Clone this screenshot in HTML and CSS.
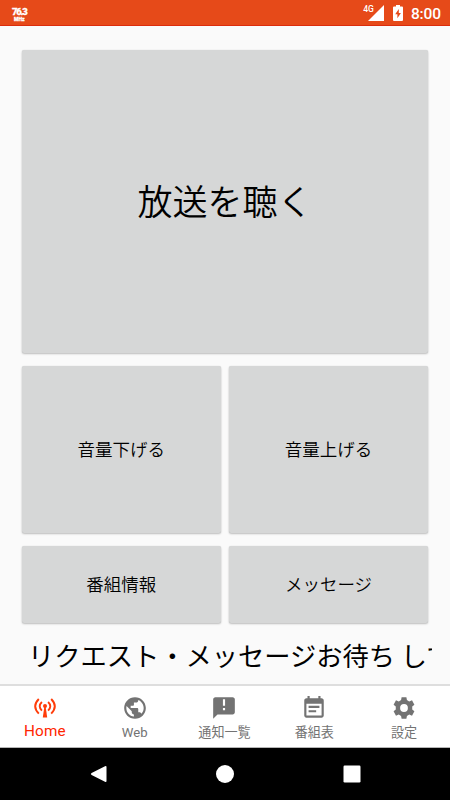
FILE: index.html
```html
<!DOCTYPE html>
<html lang="ja">
<head>
<meta charset="utf-8">
<title>Radio</title>
<link rel="stylesheet" href="styles.css">
</head>
<body>
<div class="app">
  <header class="status">
    <div class="station"><span class="freq">76.3</span><span class="mhz">MHz</span></div>
    <div class="indicators">
      <span class="network">4G</span>
      <svg class="signal" viewBox="0 0 16 16"><path d="M16 0V16H0Z"/></svg>
      <svg class="battery" viewBox="0 0 10 16"><path fill-rule="evenodd" d="M3 0H7V1.5H9Q10 1.5 10 2.5V15Q10 16 9 16H1Q0 16 0 15V2.5Q0 1.5 1 1.5H3ZM5.8 4L2.2 9.3H4.4V13.3L7.9 8H5.8Z"/></svg>
      <span class="clock">8:00</span>
    </div>
  </header>
  <main class="content">
    <button class="btn listen">放送を聴く</button>
    <div class="row volume">
      <button class="btn">音量下げる</button>
      <button class="btn">音量上げる</button>
    </div>
    <div class="row links">
      <button class="btn">番組情報</button>
      <button class="btn">メッセージ</button>
    </div>
    <div class="marquee">リクエスト・メッセージお待ち して</div>
  </main>
  <nav class="tabs">
    <a class="tab active">
      <svg class="antenna" viewBox="0 0 22 20"><g fill="none" stroke="currentColor" stroke-width="1.9"><path d="M4.800 1Q-2.400 8.300 4.800 15.600M17.200 1Q24.400 8.300 17.200 15.600M7.900 4Q3.500 8.300 7.900 12.600M14.100 4Q18.500 8.300 14.100 12.600"/></g><circle cx="11" cy="8" r="2"/><path d="M10.300 9H11.700L13.200 19.500H8.800Z"/></svg>
      <span>Home</span>
    </a>
    <a class="tab">
      <svg viewBox="0 0 24 24"><path d="M12 2C6.48 2 2 6.48 2 12s4.48 10 10 10 10-4.48 10-10S17.52 2 12 2zm-1 17.93c-3.95-.49-7-3.85-7-7.93 0-.62.08-1.21.21-1.79L9 15v1c0 1.1.9 2 2 2v1.930zm6.900-2.540c-.26-.81-1-1.390-1.900-1.390h-1v-3c0-.55-.45-1-1-1H8v-2h2c.55 0 1-.45 1-1V7h2c1.100 0 2-.9 2-2v-.41c2.930 1.190 5 4.060 5 7.410 0 2.080-.8 3.970-2.100 5.390z"/></svg>
      <span>Web</span>
    </a>
    <a class="tab">
      <svg viewBox="0 0 24 24"><path d="M20 2H4c-1.100 0-1.990.9-1.990 2L2 22l4-4h14c1.100 0 2-.9 2-2V4c0-1.100-.9-2-2-2zm-7 12h-2v-2h2v2zm0-4h-2V4h2v6z"/></svg>
      <span>通知一覧</span>
    </a>
    <a class="tab">
      <svg viewBox="0 0 24 24"><path d="M17 10H7v2h10v-2zm2-7h-1V1h-2v2H8V1H6v2H5c-1.110 0-1.990.9-1.990 2L3 19c0 1.100.89 2 2 2h14c1.100 0 2-.9 2-2V5c0-1.100-.9-2-2-2zm0 16H5V8h14v11zm-5-5H7v2h7v-2z"/></svg>
      <span>番組表</span>
    </a>
    <a class="tab">
      <svg viewBox="0 0 24 24"><path fill-rule="evenodd" d="M9.800 2H14.200L14.700 4.700L16.800 5.900L19.400 4.900L21.600 8.900L19.600 10.700V13.300L21.600 15.100L19.400 19.100L16.800 18.100L14.700 19.300L14.200 22H9.800L9.300 19.300L7.200 18.100L4.600 19.100L2.400 15.100L4.400 13.300V10.700L2.400 8.900L4.600 4.900L7.200 5.900L9.300 4.700ZM12 8.400A3.600 3.600 0 1 0 12 15.600A3.600 3.600 0 1 0 12 8.400Z"/></svg>
      <span>設定</span>
    </a>
  </nav>
  <footer class="system">
    <svg viewBox="0 0 18 18"><path d="M15 1.200Q16.500.3 16.500 2V16Q16.500 17.700 15 16.800L1.600 10Q0 9 1.600 8Z"/></svg>
    <svg viewBox="0 0 18 18"><circle cx="9" cy="9" r="9"/></svg>
    <svg viewBox="0 0 18 18"><rect x=".5" y=".5" width="17" height="17" rx="1.200"/></svg>
  </footer>
</div>
</body>
</html>
```

FILE: styles.css
```css
* { box-sizing: border-box; }
body { margin: 0; }
svg { display: block; fill: currentColor; }
.app {
  width: 450px;
  height: 800px;
  display: flex;
  flex-direction: column;
  overflow: hidden;
  background: #fafafa;
  color: #000;
  font-family: "Noto Sans CJK JP", sans-serif;
}
.status {
  height: 26px;
  flex: none;
  display: flex;
  justify-content: space-between;
  padding: 0 9px 0 12px;
  background: #e64a19;
  border-bottom: 1px solid #dc2c0c;
  color: #fff;
  font-family: Roboto, sans-serif;
}
.station {
  display: flex;
  flex-direction: column;
  align-items: center;
  padding-top: 6px;
  font-weight: 900;
}
.freq { font-size: 9.500px; line-height: 11px; letter-spacing: -1.200px; -webkit-text-stroke: .3px #fff; }
.mhz { font-size: 5px; line-height: 6px; margin-top: -1px; -webkit-text-stroke: .3px #fff; }
.indicators { display: flex; align-items: flex-start; }
.network { font-size: 8.500px; line-height: 9px; padding-top: 5px; margin-right: -6px; font-weight: 500; }
.signal { width: 16px; height: 16px; margin: 5px 9px 0 0; }
.battery { width: 10px; height: 16px; margin: 5px 8px 0 0; }
.clock { font-size: 15.500px; line-height: 26px; font-weight: 500; margin-top: 1px; letter-spacing: -.1px; }
.content {
  height: 658px;
  flex: none;
  padding: 24px 22px 0;
  display: flex;
  flex-direction: column;
}
.btn {
  margin: 0;
  padding: 0 0 1px;
  border: 0;
  border-radius: 2px;
  background: #d6d7d7;
  box-shadow: 0 1px 2px rgba(0, 0, 0, .24), 0 0 1px rgba(0, 0, 0, .14);
  color: #000;
  font: 350 17.500px/24px "Noto Sans CJK JP", sans-serif;
}
.listen { height: 303px; font-size: 35px; line-height: 50px; padding-bottom: 3px; }
.row { display: grid; grid-template-columns: 198.500px 199px; justify-content: space-between; }
.volume { height: 167px; margin-top: 13px; }
.links { height: 77px; margin-top: 13px; }
.marquee {
  height: 38px;
  margin: 13px -4px 0 6px;
  overflow: hidden;
  white-space: nowrap;
  font-size: 26.250px;
  line-height: 38px;
}
.tabs {
  height: 64px;
  flex: none;
  display: grid;
  grid-template-columns: repeat(5, 89.800px);
  background: #fff;
  border-top: 2px solid #dedede;
  border-bottom: 1px solid #b5b5b5;
}
.tab {
  display: flex;
  flex-direction: column;
  align-items: center;
  padding-top: 9px;
  color: #737373;
  font-family: Roboto, "Noto Sans CJK JP", sans-serif;
  font-size: 13.100px;
  line-height: 20px;
}
.tab svg { width: 26px; height: 26px; }
.tab span { margin-top: 2px; }
.tab.active { color: #ff3d0a; font-size: 15.300px; padding-top: 12px; }
.tab .antenna { width: 22px; height: 20px; }
.tab.active span { margin-top: 3px; color: #ff2500; letter-spacing: .2px; }
.system {
  flex: 1;
  display: flex;
  justify-content: center;
  align-items: center;
  gap: 108.500px;
  background: #000;
  color: #fff;
}
.system svg { width: 18px; height: 18px; }
```
